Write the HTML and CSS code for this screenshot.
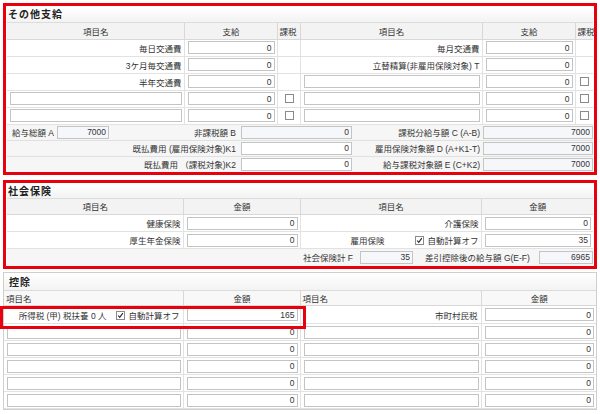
FILE: index.html
```html
<!DOCTYPE html>
<html lang="ja">
  <head>
    <meta charset="UTF-8" />
    <title>給与明細入力</title>
    <link rel="stylesheet" href="styles.css">
  </head>
  <body>
    <!-- その他支給 -->
    <div class="panel marked">
      <div class="panel-title">その他支給</div>
      <table class="grid pay">
        <colgroup>
          <col style="width:177px"><col style="width:93px"><col style="width:23px">
          <col style="width:182px"><col style="width:93px"><col>
        </colgroup>
        <tr class="head">
          <th>項目名</th><th>支給</th><th class="tax">課税</th>
          <th>項目名</th><th>支給</th><th class="tax">課税</th>
        </tr>
        <tr>
          <td class="label">毎日交通費</td><td><input class="num" value="0"></td><td></td>
          <td class="label">毎月交通費</td><td><input class="num" value="0"></td><td></td>
        </tr>
        <tr>
          <td class="label">3ケ月毎交通費</td><td><input class="num" value="0"></td><td></td>
          <td class="label">立替精算(非雇用保険対象) T</td><td><input class="num" value="0"></td><td></td>
        </tr>
        <tr>
          <td class="label">半年交通費</td><td><input class="num" value="0"></td><td></td>
          <td><input class="txt"></td><td><input class="num" value="0"></td><td class="chk-cell"><span class="chk"></span></td>
        </tr>
        <tr>
          <td><input class="txt"></td><td><input class="num" value="0"></td><td class="chk-cell"><span class="chk"></span></td>
          <td><input class="txt"></td><td><input class="num" value="0"></td><td class="chk-cell"><span class="chk"></span></td>
        </tr>
        <tr>
          <td><input class="txt"></td><td><input class="num" value="0"></td><td class="chk-cell"><span class="chk"></span></td>
          <td><input class="txt"></td><td><input class="num" value="0"></td><td class="chk-cell"><span class="chk"></span></td>
        </tr>
      </table>
      <div class="totals">
        <div class="total-a"><span>給与総額 A</span><input class="num ro short" value="7000"></div>
        <div class="t-label">非課税額 B</div>
        <div class="t-input"><input class="num ro" value="0"></div>
        <div class="t-label">課税分給与額 C (A-B)</div>
        <div class="t-input last"><input class="num ro" value="7000"></div>

        <div class="t-label wide">既払費用 (雇用保険対象)K1</div>
        <div class="t-input"><input class="num" value="0"></div>
        <div class="t-label">雇用保険対象額 D (A+K1-T)</div>
        <div class="t-input last"><input class="num ro" value="7000"></div>

        <div class="t-label wide">既払費用 （課税対象)K2</div>
        <div class="t-input"><input class="num" value="0"></div>
        <div class="t-label">給与課税対象額 E (C+K2)</div>
        <div class="t-input last"><input class="num ro" value="7000"></div>
      </div>
    </div>

    <!-- 社会保険 -->
    <div class="panel marked ins">
      <div class="panel-title">社会保険</div>
      <table class="grid">
        <colgroup>
          <col style="width:176px"><col style="width:117px"><col style="width:181px"><col>
        </colgroup>
        <tr class="head">
          <th>項目名</th><th>金額</th><th>項目名</th><th>金額</th>
        </tr>
        <tr>
          <td class="label">健康保険</td><td><input class="num" value="0"></td>
          <td class="label">介護保険</td><td><input class="num" value="0"></td>
        </tr>
        <tr>
          <td class="label">厚生年金保険</td><td><input class="num" value="0"></td>
          <td class="label">
            <span class="sep">雇用保険</span><span class="chk on"><svg viewBox="0 0 9 9"><polyline points="1.5,4.5 3.5,6.8 7.5,1.5" /></svg></span><span>自動計算オフ</span>
          </td>
          <td><input class="num" value="35"></td>
        </tr>
        <tr class="foot">
          <td colspan="2"></td>
          <td colspan="2">
            <div class="sum-row">
              <span>社会保険計 F</span><input class="num ro f" value="35">
              <span class="g-label">差引控除後の給与額 G(E-F)</span><input class="num ro g" value="6965">
            </div>
          </td>
        </tr>
      </table>
    </div>

    <!-- 控除 -->
    <div class="panel deduct">
      <div class="panel-title">控除</div>
      <table class="grid">
        <colgroup>
          <col style="width:179px"><col style="width:117px"><col style="width:181px"><col>
        </colgroup>
        <tr class="head plain">
          <th class="left">項目名</th><th>金額</th><th class="left">項目名</th><th>金額</th>
        </tr>
        <tr class="first">
          <td class="label">
            <span class="tax-text">所得税 (甲) 税扶養 0 人</span><span class="chk on"><svg viewBox="0 0 9 9"><polyline points="1.5,4.5 3.5,6.8 7.5,1.5" /></svg></span><span>自動計算オフ</span>
          </td>
          <td><input class="num" value="165"></td>
          <td class="label">市町村民税</td><td><input class="num" value="0"></td>
        </tr>
        <tr>
          <td><input class="txt"></td><td><input class="num" value="0"></td>
          <td><input class="txt"></td><td><input class="num" value="0"></td>
        </tr>
        <tr>
          <td><input class="txt"></td><td><input class="num" value="0"></td>
          <td><input class="txt"></td><td><input class="num" value="0"></td>
        </tr>
        <tr>
          <td><input class="txt"></td><td><input class="num" value="0"></td>
          <td><input class="txt"></td><td><input class="num" value="0"></td>
        </tr>
        <tr>
          <td><input class="txt"></td><td><input class="num" value="0"></td>
          <td><input class="txt"></td><td><input class="num" value="0"></td>
        </tr>
        <tr>
          <td><input class="txt"></td><td><input class="num" value="0"></td>
          <td><input class="txt"></td><td><input class="num" value="0"></td>
        </tr>
      </table>
      <div class="highlight"></div>
    </div>
  </body>
</html>
```

FILE: styles.css
```css
* {
  box-sizing: border-box;
}

body {
  margin: 0;
  padding: 3px 3px 0;
  font-family: "Liberation Sans", "Noto Sans CJK JP", sans-serif;
  font-size: 8.5px;
  color: #333;
  background: #fff;
  overflow: hidden;
}

.panel {
  border: 1px solid #cfcfcf;
  background: #fff;
  margin-bottom: 3px;
}

.panel.marked {
  border: 3px solid #e8000d;
  padding: 1px 1px 0;
  margin-bottom: 5px;
  overflow: hidden;
}

.panel.marked.ins {
  margin-bottom: 3px;
}

.panel-title {
  height: 16px;
  line-height: 16px;
  padding-left: 1px;
  font-size: 10px;
  font-weight: bold;
  letter-spacing: 1px;
  color: #222;
  background: linear-gradient(#fff, #f3f3f3);
  border-bottom: 1px solid #dcdcdc;
}

.ins .panel-title {
  height: 15px;
  line-height: 15px;
}

.deduct {
  position: relative;
}

.deduct .panel-title {
  height: 18px;
  line-height: 19px;
  padding-left: 5px;
}

/* tables */
.grid {
  width: 100%;
  table-layout: fixed;
  border-collapse: collapse;
}

.grid th,
.grid td {
  padding: 0 2px 0 3px;
  height: 17px;
  white-space: nowrap;
  border-left: 1px solid #e2e2e2;
  border-bottom: 1px solid #e2e2e2;
  vertical-align: middle;
}

.grid th:first-child,
.grid td:first-child {
  border-left: none;
}

.grid .head th {
  height: 16px;
  font-weight: normal;
  text-align: center;
  background: #f3f3f3;
  border-left-color: #d8d8d8;
  border-bottom-color: #d8d8d8;
}

.grid .head th.tax {
  text-align: left;
  padding-left: 2px;
}

.grid .head.plain th {
  height: 15px;
  background: #f8f8f8;
}

.grid .head th.left {
  text-align: left;
  padding-left: 2px;
}

.grid td.label {
  text-align: right;
  padding-right: 2px;
}

.deduct .grid td.label {
  padding-right: 3px;
}

.deduct .grid tr.first td {
  height: 18px;
}

.chk-cell {
  text-align: center;
}

/* inputs */
input {
  font: inherit;
  color: #333;
  height: 13px;
  width: 100%;
  margin: 0;
  padding: 0 2px;
  border: 1px solid #c4c4c4;
  border-radius: 0;
  background: #fff;
  display: block;
}

input.num {
  text-align: right;
}

input.ro {
  background: #f5f7fb;
}

input.short {
  width: 52px;
  margin-left: 3px;
}

.chk {
  display: inline-block;
  width: 9px;
  height: 9px;
  border: 1px solid #8a8a8a;
  background: #fff;
  vertical-align: -1px;
}

.chk svg {
  display: block;
  width: 7px;
  height: 7px;
}

.chk polyline {
  fill: none;
  stroke: #222;
  stroke-width: 1.4;
}

.chk.on {
  margin-right: 3px;
}

.sep {
  margin-right: 31px;
}

.tax-text {
  margin-right: 10px;
}

/* totals of その他支給 */
.totals {
  display: grid;
  grid-template-columns: 123px 108px 116px 128px 1fr;
  background: #f6f6f6;
}

.totals > div {
  height: 16px;
  display: flex;
  align-items: center;
  white-space: nowrap;
  border-bottom: 1px solid #e0e0e0;
}

.totals > div:nth-last-child(-n+4) {
  height: 15px;
  border-bottom: none;
}

.total-a {
  padding-left: 5px;
}

.t-label {
  justify-content: flex-end;
  padding-right: 2px;
}

.t-label.wide {
  grid-column: span 2;
}

.t-input {
  padding: 0 2px 0 3px;
}

.t-input.last {
  padding: 0 0 0 1px;
}

/* 社会保険 footer */
.grid tr.foot td {
  background: #f6f6f6;
  border-bottom: none;
  border-left: none;
  padding: 0;
}

.sum-row {
  display: flex;
  align-items: center;
  padding-left: 3px;
}

.sum-row span {
  flex: none;
}

.sum-row input.f {
  flex: none;
  width: 53px;
  margin-left: 7px;
}

.g-label {
  margin-left: 12px;
}

.sum-row input.g {
  flex: 1;
  width: 0;
  min-width: 0;
  margin-left: 9px;
}

/* annotation box over 所得税 row */
.highlight {
  position: absolute;
  left: -4px;
  top: 33px;
  width: 306px;
  height: 23px;
  border: 3px solid #e8000d;
  pointer-events: none;
}
```
